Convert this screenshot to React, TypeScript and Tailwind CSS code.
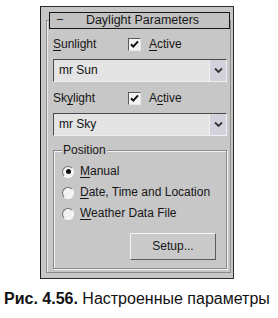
import React from 'react';

const U = ({ children }: { children: React.ReactNode }) => (
  <span className="underline underline-offset-2 decoration-1">{children}</span>
);

function CheckBox() {
  return (
    <span className="w-[13px] h-[13px] bg-[#f4f4f4] border border-t-[#5a5a5a] border-l-[#5a5a5a] border-r-[#e8e8e8] border-b-[#e8e8e8] flex items-center justify-center">
      <svg width="11" height="11" viewBox="0 0 11 11">
        <path d="M2 5.2 L4.3 7.6 L9 2.4" fill="none" stroke="#111" strokeWidth="2" />
      </svg>
    </span>
  );
}

function Dropdown({ value }: { value: string }) {
  return (
    <div className="flex w-[174px] h-[23px] border border-t-[#4a4a4a] border-l-[#4a4a4a] border-r-[#efefef] border-b-[#efefef]">
      <div className="flex-1 bg-[#e4e4e4] flex items-center pl-[5px] text-[12px] text-[#111]">{value}</div>
      <div className="w-[17px] bg-[#d2d2dc] flex items-center justify-center border-l border-[#f0f0f0]">
        <svg width="9" height="7" viewBox="0 0 9 7">
          <path d="M1 1.5 L4.5 5 L8 1.5" fill="none" stroke="#333" strokeWidth="1.8" />
        </svg>
      </div>
    </div>
  );
}

function Radio({ checked, children }: { checked?: boolean; children: React.ReactNode }) {
  return (
    <div className="flex items-center h-[15px]">
      <span className="w-[12px] h-[12px] rounded-full bg-[#f2f2f2] border border-t-[#707070] border-l-[#707070] border-r-[#fafafa] border-b-[#fafafa] flex items-center justify-center">
        {checked && <span className="w-[5px] h-[5px] rounded-full bg-[#111]" />}
      </span>
      <span className="ml-[6px]">{children}</span>
    </div>
  );
}

export default function App() {
  return (
    <div className="w-[278px] h-[318px] bg-white font-['Liberation_Sans',Arial,sans-serif] text-[#161616] overflow-hidden">
      <div className="pt-[6px] pl-[40px]">
        <div className="w-[194px] h-[273px] bg-[#c7c7c7] border border-[#2c2c2c] border-l-[#1c1c1c] text-[12px] leading-[15px]">
          <div className="relative z-10 mt-[5px] ml-[8px] w-[181px] h-[17px] bg-[#c2c2c2] border border-[#161616] flex items-center text-[12.5px]">
            <span className="w-[14px] pl-[6px]">−</span>
            <span className="flex-1 text-center pr-[8px]">Daylight Parameters</span>
          </div>
          <div className="-mt-[9px] ml-[5px] w-[185px] h-[253px] border border-[#8e8e8e] shadow-[inset_1px_1px_0_#ececec] pl-[6px]">
            <div className="mt-[16px] flex items-center h-[15px]">
              <span className="w-[75px]"><U>S</U>unlight</span>
              <CheckBox />
              <span className="ml-[8px]"><U>A</U>ctive</span>
            </div>
            <div className="mt-[7px]">
              <Dropdown value="mr Sun" />
            </div>
            <div className="mt-[9px] flex items-center h-[15px]">
              <span className="w-[75px]">Sk<U>y</U>light</span>
              <CheckBox />
              <span className="ml-[8px]">A<U>c</U>tive</span>
            </div>
            <div className="mt-[7px]">
              <Dropdown value="mr Sky" />
            </div>
            <div className="mt-[14px] w-[174px] h-[119px] border border-[#8a8a8a] shadow-[inset_1px_1px_0_#f0f0f0,1px_1px_0_#f0f0f0] pl-[8px]">
              <div className="-mt-[8px] w-fit bg-[#c7c7c7] px-[1px]">Position</div>
              <div className="mt-[6px] flex flex-col gap-[6px]">
                <Radio checked><U>M</U>anual</Radio>
                <Radio><U>D</U>ate, Time and Location</Radio>
                <Radio><U>W</U>eather Data File</Radio>
              </div>
              <div className="mt-[12px] ml-[68px] w-[86px] h-[27px] bg-[#c9c9c9] border border-t-[#f4f4f4] border-l-[#f4f4f4] border-r-[#5c5c5c] border-b-[#5c5c5c] flex items-center justify-center">
                Setup...
              </div>
            </div>
          </div>
        </div>
      </div>
      <div className="mt-[11px] pl-[4px] text-[16px] leading-[18px] whitespace-nowrap text-[#111]">
        <span className="font-bold">Рис. 4.56.</span> Настроенные параметры
      </div>
    </div>
  );
}
